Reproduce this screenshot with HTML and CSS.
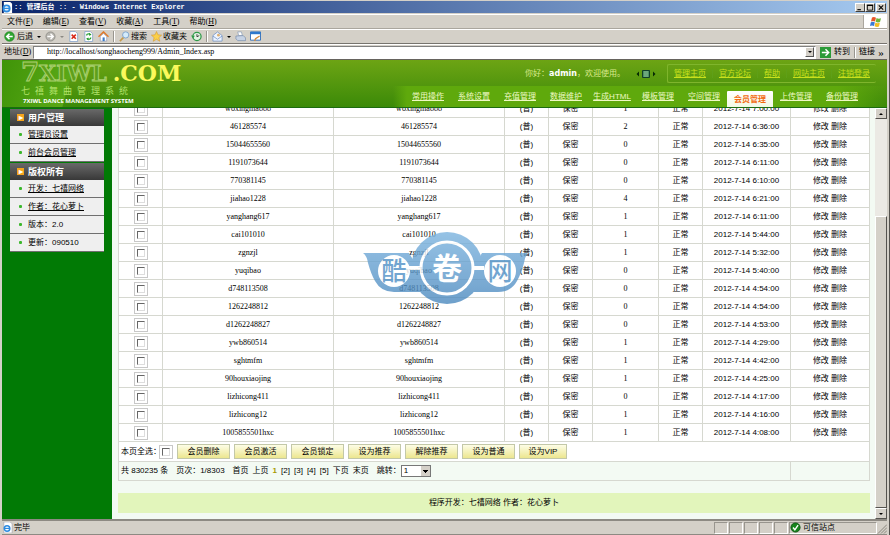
FILE: index.html
```html
<!DOCTYPE html>
<html lang="zh-CN">
<head>
    <meta charset="UTF-8">
    <title>:: 管理后台 ::</title>
    <link rel="stylesheet" href="styles.css">
</head>
<body>
    <div class="window">
        <div class="title-bar">
            <svg class="icon" viewBox="0 0 12 12"><path d="M2 0h7l2 2v10H2z" fill="#fff"/><circle cx="5" cy="7" r="3.4" fill="none" stroke="#2c8be0" stroke-width="2"/><path d="M2 7h6" stroke="#2c8be0" stroke-width="1.5"/></svg>
            <span class="title">:: 管理后台 :: - Windows Internet Explorer</span>
            <button type="button" class="win-btn" aria-label="最小化"><svg viewBox="0 0 8 8"><path d="M1 6.5h4" stroke="#000" stroke-width="1.3"/></svg></button>
            <button type="button" class="win-btn" aria-label="最大化"><svg viewBox="0 0 8 8"><path d="M1 1.5h6v5.5h-6z" fill="none" stroke="#000"/><path d="M.5 1.5h7" stroke="#000" stroke-width="1.4"/></svg></button>
            <button type="button" class="win-btn close" aria-label="关闭"><svg viewBox="0 0 8 8"><path d="M1.5 1.5l5 5M6.5 1.5l-5 5" stroke="#000" stroke-width="1.3"/></svg></button>
        </div>
        <div class="menu-bar">
            <a href="#">文件(<u>F</u>)</a>
            <a href="#">编辑(<u>E</u>)</a>
            <a href="#">查看(<u>V</u>)</a>
            <a href="#">收藏(<u>A</u>)</a>
            <a href="#">工具(<u>T</u>)</a>
            <a href="#">帮助(<u>H</u>)</a>
            <div class="flag"><svg viewBox="0 0 14 12"><path d="M3 1.5q2-1 4 .2L6 5.600q-2-1-4 0z" fill="#e8562a"/><path d="M7.600 2q2 1.200 4.400.2L11 6q-2 1-4.400-.2z" fill="#6fb53a"/><path d="M1.800 6.200q2-1 4 0L5 10q-2-1-4 0z" fill="#3a7ad6"/><path d="M6.400 6.500q2 1.200 4.400.2L10 10.500q-2 1-4.400-.2z" fill="#f3bd25"/></svg></div>
        </div>
        <div class="tool-bar">
            <a href="#" class="tool back">
                <svg class="icon" viewBox="0 0 12 12"><circle cx="6" cy="6" r="5.300" fill="#2fa52f" stroke="#177a1a" stroke-width=".6"/><path d="M9.500 6H3.500M6 3L3 6l3 3" fill="none" stroke="#fff" stroke-width="1.700"/></svg>
                后退</a>
            <span class="caret"></span>
            <a href="#" class="tool" aria-label="前进"><svg class="icon" viewBox="0 0 12 12"><circle cx="6" cy="6" r="5" fill="#b5b3ad" stroke="#8b8983" stroke-width=".8"/><path d="M2.500 6h6M6 3l3 3-3 3" fill="none" stroke="#fff" stroke-width="1.500"/></svg></a>
            <span class="caret dim"></span>
            <a href="#" class="tool" aria-label="停止"><svg class="icon" viewBox="0 0 12 12"><path d="M2 .5h6l2.500 2.500v8.500H2z" fill="#fff" stroke="#7b9cc8" stroke-width=".8"/><path d="M4 4l4.500 4.500M8.500 4L4 8.500" stroke="#d82a1a" stroke-width="1.700"/></svg></a>
            <a href="#" class="tool" aria-label="刷新"><svg class="icon" viewBox="0 0 12 12"><path d="M2 .5h6l2.500 2.500v8.500H2z" fill="#fff" stroke="#7b9cc8" stroke-width=".8"/><path d="M4 5q0-2 2.500-2l1 .5M8.500 7q0 2-2.500 2L5 8.500" fill="none" stroke="#1f9a2a" stroke-width="1.300"/><path d="M6.500 2l2.800 1.800L7 5.500zM6 7L3.300 8.500 6 10.300z" fill="#1f9a2a"/></svg></a>
            <a href="#" class="tool" aria-label="主页"><svg class="icon" viewBox="0 0 12 12"><path d="M2.500 6v5h7V6L6 2.500z" fill="#fff" stroke="#8595b5" stroke-width=".7"/><path d="M.5 6.300L6 1l5.500 5.300" fill="none" stroke="#e07b2c" stroke-width="1.600"/><path d="M5 7h2.300v4H5z" fill="#3c7cc9"/></svg></a>
            <span class="sep"></span>
            <a href="#" class="tool"><svg class="icon" viewBox="0 0 12 12"><path d="M5 7L1 11" stroke="#c79a4a" stroke-width="1.800"/><circle cx="7.300" cy="4.300" r="3.400" fill="#d4ebfb" stroke="#7ba0c8"/></svg>搜索</a>
            <a href="#" class="tool"><svg class="icon" viewBox="0 0 12 12"><path d="M6 .5l1.600 3.700 4 .3-3 2.700 1 4L6 9l-3.600 2.200 1-4-3-2.700 4-.3z" fill="#fbd04a" stroke="#d4952a" stroke-width=".6"/></svg>收藏夹</a>
            <a href="#" class="tool" aria-label="历史"><svg class="icon" viewBox="0 0 12 12"><circle cx="6.500" cy="6" r="4.500" fill="#e4f3e4" stroke="#2f9a48" stroke-width="1.400"/><path d="M6.500 3.500V6.300L9 5" fill="none" stroke="#333"/><path d="M0 5l4.300.3-2.100 3z" fill="#2f9a48"/></svg></a>
            <span class="sep"></span>
            <a href="#" class="tool" aria-label="邮件"><svg class="icon" viewBox="0 0 12 12"><path d="M1 5l5-4 5 4v6H1z" fill="#eef5ff" stroke="#6e8fc4" stroke-width=".8"/><path d="M1 5.500L6 9l5-3.500" fill="none" stroke="#6e8fc4" stroke-width=".8"/><circle cx="7" cy="4.500" r="1.500" fill="#e0b070"/></svg></a>
            <span class="caret"></span>
            <a href="#" class="tool" aria-label="打印"><svg class="icon" viewBox="0 0 12 12"><path d="M3 1h4l1 4H4z" fill="#fff" stroke="#8398b6" stroke-width=".7"/><path d="M1 5.500l8-.5 2.500 2.500v3H3L1 8.500z" fill="#c6d2e4" stroke="#7287a8" stroke-width=".7"/></svg></a>
            <a href="#" class="tool" aria-label="编辑"><svg class="icon" viewBox="0 0 12 12"><path d="M.5 1h11v9H.5z" fill="#fff" stroke="#2b69b8"/><path d="M.5 1h11v2.500H.5z" fill="#2e78cc"/><path d="M5 11l1-2.500 4.500-3" stroke="#d48b3a" stroke-width="1.400" fill="none"/></svg></a>
        </div>
        <div class="address-bar">
            <label for="address">地址(<u>D</u>)</label>
            <div class="address-box">
                <input type="text" id="address" value="http://localhost/songhaocheng999/Admin_Index.asp">
                <button type="button" class="drop" aria-label="展开"></button>
            </div>
            <button type="button" class="go"><svg class="icon" viewBox="0 0 12 12"><path d="M0 0h12v12H0z" fill="#2b9b38"/><path d="M2 6h7M6 2.500L9.500 6 6 9.500" fill="none" stroke="#fff" stroke-width="1.600"/></svg>转到</button>
            <span class="sep"></span>
            <span class="links">链接</span>
            <span class="more">»</span>
        </div>

        <div class="page">
            <div class="header">
                <div class="logo">
                    <div class="logo-name"><span class="outline"><span class="seven">7</span>XIWL</span><span class="com">.COM</span></div>
                    <div class="logo-cn">七禧舞曲管理系统</div>
                    <div class="logo-en">7XIWL DANCE MANAGEMENT SYSTEM</div>
                </div>
                <div class="header-right">
                    <div class="user-row">
                        <span class="hello">你好：<b>admin</b>，欢迎使用。</span>
                        <svg class="switch" viewBox="0 0 20 8"><path d="M3 1.500v5L.5 4zM17 1.500v5L19.500 4z" fill="#062a05"/><path d="M6.500.5h7v7h-7z" fill="#4e8f62" stroke="#123f2a"/><path d="M9 1v6M11 1v6" stroke="#a8d4b0" stroke-width=".7"/></svg>
                        <div class="top-links">
                            <a href="#">管理主页</a>
                            <a href="#">官方论坛</a>
                            <a href="#">帮助</a>
                            <a href="#">网站主页</a>
                            <a href="#">注销登录</a>
                        </div>
                    </div>
                    <div class="nav">
                        <a href="#">常用操作</a>
                        <a href="#">系统设置</a>
                        <a href="#">充值管理</a>
                        <a href="#">数据维护</a>
                        <a href="#">生成HTML</a>
                        <a href="#">模板管理</a>
                        <a href="#">空间管理</a>
                        <a href="#" class="active">会员管理</a>
                        <a href="#">上传管理</a>
                        <a href="#">备份管理</a>
                    </div>
                </div>
            </div>
            <div class="body">
                <div class="sidebar">
                    <div class="box">
                        <h2>用户管理</h2>
                        <ul>
                            <li><a href="#">管理员设置</a></li>
                            <li><a href="#">前台会员管理</a></li>
                        </ul>
                    </div>
                    <div class="box">
                        <h2>版权所有</h2>
                        <ul>
                            <li><a href="#">开发：七禧网络</a></li>
                            <li><a href="#">作者：花心萝卜</a></li>
                            <li>版本：2.0</li>
                            <li>更新：090510</li>
                        </ul>
                    </div>
                </div>
                <div class="main">
                    <table class="members">
                        <colgroup>
                            <col class="c-check"><col><col><col class="c-small"><col class="c-small"><col class="c-count"><col class="c-small"><col class="c-date"><col class="c-action">
                        </colgroup>
                        <tbody id="rows"></tbody>
                        <tfoot>
                            <tr class="actions">
                                <td colspan="9">
                                    <div class="line">
                                        <label for="all">本页全选：</label><input type="checkbox" id="all">
                                        <button type="button">会员删除</button>
                                        <button type="button">会员激活</button>
                                        <button type="button">会员锁定</button>
                                        <button type="button">设为推荐</button>
                                        <button type="button">解除推荐</button>
                                        <button type="button">设为普通</button>
                                        <button type="button" class="vip">设为VIP</button>
                                    </div>
                                </td>
                            </tr>
                            <tr class="pager">
                                <td colspan="7">
                                    <div class="line">
                                        <span>共 830235 条</span>
                                        <span>页次：1/8303</span>
                                        <span class="pages"><a href="#">首页</a> <a href="#">上页</a> <b>1</b> <a href="#">[2]</a> <a href="#">[3]</a> <a href="#">[4]</a> <a href="#">[5]</a> <a href="#">下页</a> <a href="#">末页</a></span>
                                        <span class="jump"><label for="jump">跳转：</label><select id="jump"><option>1</option><option>2</option><option>3</option></select></span>
                                    </div>
                                </td>
                                <td class="open"></td>
                                <td></td>
                            </tr>
                        </tfoot>
                    </table>
                    <div class="footer">程序开发：七禧网络 作者：花心萝卜</div>
                </div>
                <div class="scrollbar">
                    <button type="button" class="up" aria-label="向上"></button>
                    <div class="track"><div class="thumb"></div></div>
                    <button type="button" class="down" aria-label="向下"></button>
                </div>
            </div>
        </div>

        <div class="status-bar">
            <svg class="icon" viewBox="0 0 12 12"><path d="M2 0h7l2 2v10H2z" fill="#fff" stroke="#889" stroke-width=".5"/><circle cx="5.500" cy="7" r="3" fill="none" stroke="#2c8be0" stroke-width="1.700"/><path d="M3 7h5" stroke="#2c8be0" stroke-width="1.300"/></svg>
            <span class="done">完毕</span>
            <span class="pane"></span><span class="pane"></span><span class="pane"></span><span class="pane"></span><span class="pane"></span>
            <span class="zone"><svg class="icon" viewBox="0 0 12 12"><circle cx="6" cy="6" r="5" fill="#16851c" stroke="#0c5410"/><path d="M3.300 6l2 2.500L8.800 3.500" fill="none" stroke="#fff" stroke-width="1.500"/></svg>可信站点</span>
            <svg class="grip" viewBox="0 0 10 12"><path d="M1 11.500l9-9M4 11.500l6-6M7 11.500l3-3" stroke="#88857d"/></svg>
        </div>

        <svg class="watermark" viewBox="0 0 170 74">
            <defs>
                <linearGradient id="sky" gradientUnits="userSpaceOnUse" x1="0" y1="0" x2="0" y2="74">
                    <stop offset="0" stop-color="#7db5e0"/>
                    <stop offset="1" stop-color="#4a88be"/>
                </linearGradient>
            </defs>
            <g fill="url(#sky)">
                <path d="M3 22h46l6 10v18l8 11H34q-13 0-19-11-4-7-7-18Q7 25 3 22z"/>
                <path d="M168 22h-46l-6 10v18l-8 11h30q13 0 19-11 4-7 7-18 1-7 4-10z"/>
                <circle cx="87" cy="37" r="36"/>
            </g>
            <path d="M48 37h14M112 37h12" stroke="#fff" stroke-width="4"/>
            <circle cx="87" cy="37" r="26" fill="none" stroke="#fff" stroke-width="3"/>
            <circle cx="34" cy="40" r="16" fill="#fff"/>
            <circle cx="140" cy="40" r="16" fill="#fff"/>
            <text x="34" y="49" class="mark-side">酷</text>
            <text x="87" y="48" class="mark-mid">卷</text>
            <text x="140" y="49" class="mark-side">网</text>
        </svg>
    </div>
    <script src="members.js"></script>
</body>
</html>
```
FILE: styles.css
```css
* {
    box-sizing: border-box;
}
body {
    margin: 0;
    font-family: "Liberation Sans", "Noto Sans CJK SC", sans-serif;
    font-size: 8px;
    line-height: 12px;
    color: #000;
}
a {
    color: inherit;
    text-decoration: none;
}
button, input, select {
    font: inherit;
    color: inherit;
    margin: 0;
    padding: 0;
    border-radius: 0;
}
svg {
    display: block;
    flex: none;
}
.icon {
    width: 11px;
    height: 11px;
}
.window {
    position: relative;
    display: flex;
    flex-direction: column;
    height: 100vh;
    padding: 1px 2px 0 2px;
    background-color: #d4d0c8;
    border-right: 1px solid #55534f;
    overflow: hidden;
}

/* Browser bars */
.title-bar {
    display: flex;
    align-items: center;
    height: 12px;
    padding-right: 1px;
    background: linear-gradient(to right, #0a246a, #a6caf0);
    color: #fff;
    flex: none;
}
.title {
    flex: 1;
    margin-left: 1px;
    font-family: "Liberation Mono", "Noto Sans CJK SC", monospace;
    font-size: 7px;
    font-weight: bold;
    white-space: nowrap;
}
.win-btn {
    width: 10px;
    height: 9px;
    border: 1px solid;
    border-color: #fff #404040 #404040 #fff;
    background-color: #d4d0c8;
}
.win-btn svg {
    width: 8px;
    height: 7px;
}
.win-btn.close {
    margin-left: 1px;
}
.menu-bar, .tool-bar, .address-bar {
    display: flex;
    align-items: center;
    flex: none;
    height: 15px;
    border-top: 1px solid #fff;
    border-bottom: 1px solid #aaa69e;
    font-family: "Liberation Serif", "Noto Sans CJK SC", serif;
    white-space: nowrap;
}
.menu-bar {
    margin-top: 1px;
}
.menu-bar a {
    padding: 0 5px;
}
.flag {
    align-self: stretch;
    display: flex;
    align-items: center;
    justify-content: center;
    width: 24px;
    margin-left: auto;
    background-color: #fff;
    border-left: 1px solid #aaa69e;
}
.flag svg {
    width: 14px;
    height: 12px;
}
.tool-bar {
    padding-left: 2px;
    gap: 4px;
    border-bottom-color: #77746e;
}
.tool {
    display: flex;
    align-items: center;
    gap: 1px;
}
.tool.back .icon {
    margin-right: 1px;
}
.caret {
    border: 2px solid transparent;
    border-top-color: #000;
    border-bottom: 0;
}
.caret.dim {
    border-top-color: #8b8983;
}
.sep {
    width: 1px;
    height: 11px;
    background-color: #98958e;
    border-right: 1px solid #fff;
    box-sizing: content-box;
}
.address-bar {
    height: 16px;
    padding-left: 2px;
    border-bottom-color: #66635d;
}
.address-bar label {
    width: 29px;
}
.address-box {
    flex: 1;
    display: flex;
    align-items: center;
    height: 13px;
    padding: 0 1px;
    background-color: #fff;
    border: 1px solid #808080;
    border-color: #808080 #fff #fff #808080;
}
.address-box input {
    flex: 1;
    padding-left: 12px;
    border: 0;
    background: none;
    outline: none;
    height: 11px;
}
.drop {
    width: 9px;
    height: 10px;
    border: 1px solid;
    border-color: #fff #555 #555 #fff;
    background: #d4d0c8;
    display: flex;
    align-items: center;
    justify-content: center;
}
.drop::after {
    content: "";
    border: 2px solid transparent;
    border-top-color: #000;
    border-bottom: 0;
}
.go {
    display: flex;
    align-items: center;
    gap: 3px;
    margin: 0 4px;
    border: 0;
    background: none;
}
.links {
    margin-left: 3px;
}
.more {
    width: 12px;
    font-size: 11px;
    text-align: center;
}

/* Site header */
.page {
    display: flex;
    flex-direction: column;
    flex: 1;
    min-height: 0;
    background-color: #017a05;
}
.header {
    display: flex;
    justify-content: space-between;
    flex: none;
    height: 48px;
    background: linear-gradient(#6da414, #3b8a08);
    border-bottom: 1px solid #1c6b10;
    white-space: nowrap;
}
.logo {
    padding-left: 19px;
    background: linear-gradient(105deg, #3f9408 0, #5aa816 70px, transparent 71px);
}
.logo-name {
    display: flex;
    align-items: baseline;
    height: 25px;
    font-family: "DejaVu Serif", serif;
    font-size: 22px;
    font-weight: bold;
    line-height: 25px;
}
.outline {
    color: #5fa01c;
    -webkit-text-stroke: 1px #a9d070;
}
.seven {
    font-size: 26px;
}
.com {
    margin-left: 6px;
    color: #fbf95c;
}
.logo-cn {
    font-size: 9px;
    letter-spacing: 5px;
    color: #b2e26a;
    line-height: 12px;
}
.logo-en {
    padding-left: 2px;
    font-family: "Open Sans", sans-serif;
    font-size: 6px;
    font-weight: bold;
    line-height: 9px;
    color: #fff;
}
.header-right {
    display: flex;
    flex-direction: column;
    justify-content: space-between;
}
.user-row {
    display: flex;
    align-items: center;
    justify-content: flex-end;
    padding: 4px 11px 0 0;
    color: #d9ea8c;
}
.hello b {
    font-family: "DejaVu Sans", sans-serif;
    color: #fff;
}
.switch {
    width: 20px;
    height: 8px;
    margin: 0 11px;
}
.top-links {
    display: flex;
    height: 19px;
    align-items: center;
    border: 1px solid #7fb52c;
    border-right: 0;
    border-radius: 2px;
}
.top-links a {
    padding: 0 6px;
    border-right: 1px solid #5f9f18;
    line-height: 9px;
    color: #c9e01c;
    text-decoration: underline;
}
.top-links a:last-child {
    border-right: 0;
}
.nav {
    display: flex;
    align-items: flex-end;
    height: 21px;
    padding: 0 22px 0 12px;
    background: linear-gradient(to right, transparent, #5fa90c 14px, #5fa90c 90%, transparent);
}
.nav a {
    width: 46px;
    height: 16px;
    line-height: 12px;
    text-align: center;
    color: #eef9c4;
    text-decoration: underline;
}
.nav .active {
    line-height: 18px;
    background: linear-gradient(#fff, #f2f8e4);
    border-radius: 1px 1px 0 0;
    color: #f26a12;
    font-weight: bold;
    text-decoration: none;
}

/* Body columns */
.body {
    display: flex;
    flex: 1;
    min-height: 0;
}
.sidebar {
    flex: none;
    width: 110px;
    padding: 1px 8px;
}
.box {
    margin-bottom: 1px;
}
.box h2 {
    display: flex;
    align-items: center;
    gap: 4px;
    height: 17px;
    margin: 0;
    padding-left: 7px;
    background: linear-gradient(#696969, #383838);
    color: #fff;
    font-size: 9px;
}
.box h2::before {
    content: "▸";
    width: 7px;
    height: 7px;
    line-height: 7px;
    font-size: 8px;
    text-align: center;
    background-color: #f5a41c;
}
.box ul {
    margin: 0;
    padding: 0;
    list-style: none;
}
.box li {
    display: flex;
    align-items: center;
    gap: 6px;
    height: 18px;
    padding-left: 9px;
    background-color: #efefef;
    border-bottom: 1px solid #6f6f6f;
}
.box li::before {
    content: "";
    width: 3px;
    height: 3px;
    background-color: #3cb82c;
    border-radius: 1px;
}
.box li a {
    text-decoration: underline;
}
.main {
    flex: 1;
    display: flex;
    flex-direction: column;
    justify-content: flex-end;
    min-width: 0;
    padding: 0 5px 6px 6px;
    background-color: #f3faf3;
    overflow: hidden;
}
.members {
    width: 100%;
    table-layout: fixed;
    border-collapse: collapse;
    background-color: #fff;
    border: 1px solid #d3dfbd;
}
.c-check, .c-small {
    width: 44px;
}
.c-count {
    width: 66px;
}
.c-date {
    width: 88px;
}
.c-action {
    width: 79px;
}
.members td {
    height: 18px;
    padding: 0;
    border: 1px solid #d6d8d0;
    text-align: center;
    white-space: nowrap;
}
.members .name {
    font-family: "Liberation Serif", serif;
}
.members input {
    appearance: none;
    display: block;
    width: 8px;
    height: 8px;
    margin: 0 auto;
    background-color: #fff;
    border: 1px solid;
    border-color: #666 #ddd #ddd #666;
    outline: 1px solid #c8c8c8;
    outline-offset: 2px;
}
.line {
    display: flex;
    align-items: center;
    padding-left: 2px;
}
.members .actions td {
    height: 20px;
}
.members .actions input {
    margin: 0 7px 0 1px;
}
.actions button {
    width: 53px;
    height: 15px;
    margin-right: 4px;
    border: 1px solid #c3c8a8;
    background: linear-gradient(#fdfde6, #ece68f);
    line-height: 11px;
}
.actions .vip {
    width: 48px;
}
.members .pager td {
    height: 19px;
    background-color: #f3faf3;
}
.pager .line {
    gap: 8px;
}
.members .pager td:first-child {
    border-right: 0;
}
.members .pager .open {
    border-left: 0;
}
.pages {
    display: flex;
    gap: 4px;
}
.pages b {
    color: #a89b00;
}
.jump {
    display: flex;
    align-items: center;
}
.jump select {
    appearance: none;
    width: 30px;
    height: 12px;
    padding-left: 2px;
    border: 1px solid #777;
    background: linear-gradient(#000, #000) 21px 4px / 5px 1px no-repeat, linear-gradient(#000, #000) 22px 5px / 3px 1px no-repeat, linear-gradient(#000, #000) 23px 6px / 1px 1px no-repeat, linear-gradient(to right, #fff 19px, #d4d0c8 19px);
    line-height: 10px;
}
.footer {
    margin-top: 12px;
    height: 21px;
    line-height: 20px;
    text-align: center;
    background-color: #e2f5bb;
}
.scrollbar {
    display: flex;
    flex-direction: column;
    width: 12px;
    background-color: #ebe9e4;
}
.scrollbar button, .thumb {
    border: 1px solid;
    border-color: #fff #55534f #55534f #fff;
    background-color: #d4d0c8;
}
.scrollbar button {
    display: flex;
    align-items: center;
    justify-content: center;
    height: 11px;
}
.scrollbar button::after {
    content: "";
    border: 2px solid transparent;
}
.scrollbar .up::after {
    border-bottom-color: #000;
    border-top: 0;
}
.scrollbar .down::after {
    border-top-color: #000;
    border-bottom: 0;
}
.track {
    flex: 1;
    display: flex;
    flex-direction: column;
    justify-content: flex-end;
}
.thumb {
    height: 75%;
}

/* Status bar */
.status-bar {
    display: flex;
    align-items: center;
    flex: none;
    height: 16px;
    border-top: 2px solid #8d8a83;
    border-bottom: 1px solid #8d8a83;
}
.done {
    flex: 1;
    margin-left: 1px;
}
.pane, .zone {
    height: 12px;
    border: 1px solid;
    border-color: #98958e #fff #fff #98958e;
}
.pane {
    width: 14px;
    margin-right: 1px;
}
.zone {
    display: flex;
    align-items: center;
    gap: 2px;
    width: 88px;
}
.grip {
    width: 10px;
    height: 12px;
}

.watermark {
    position: absolute;
    left: 50%;
    top: 50%;
    width: 170px;
    height: 74px;
    transform: translate(-50%, -50%);
    opacity: 0.8;
    pointer-events: none;
}
.mark-side, .mark-mid {
    font-family: "Noto Sans CJK SC", sans-serif;
    text-anchor: middle;
}
.mark-side {
    font-size: 25px;
    fill: #4f90c6;
    font-weight: 500;
}
.mark-mid {
    font-size: 30px;
    fill: #fff;
    font-weight: bold;
}
```
FILE: members.js
```js
var members = [
    ['woxingma888', 1, '7:00:00'],
    ['461285574', 2, '6:36:00'],
    ['15044655560', 0, '6:35:00'],
    ['1191073644', 0, '6:11:00'],
    ['770381145', 0, '6:10:00'],
    ['jiahao1228', 4, '6:21:00'],
    ['yanghang617', 1, '6:11:00'],
    ['cai101010', 1, '5:44:00'],
    ['zgnzjl', 1, '5:32:00'],
    ['yuqibao', 0, '5:40:00'],
    ['d748113508', 0, '4:54:00'],
    ['1262248812', 0, '4:54:00'],
    ['d1262248827', 0, '4:53:00'],
    ['ywb860514', 1, '4:29:00'],
    ['sghtmfm', 1, '4:42:00'],
    ['90houxiaojing', 1, '4:25:00'],
    ['lizhicong411', 0, '4:17:00'],
    ['lizhicong12', 1, '4:16:00'],
    ['1005855501hxc', 1, '4:08:00']
];

document.getElementById('rows').innerHTML = members.map(function (m) {
    return '<tr><td><input type="checkbox" aria-label="' + m[0] + '"></td>' +
        '<td class="name">' + m[0] + '</td><td class="name">' + m[0] + '</td>' +
        '<td>(普)</td><td>保密</td><td class="name">' + m[1] + '</td><td>正常</td>' +
        '<td>2012-7-14 ' + m[2] + '</td>' +
        '<td><a href="#">修改</a> <a href="#">删除</a></td></tr>';
}).join('');
```
